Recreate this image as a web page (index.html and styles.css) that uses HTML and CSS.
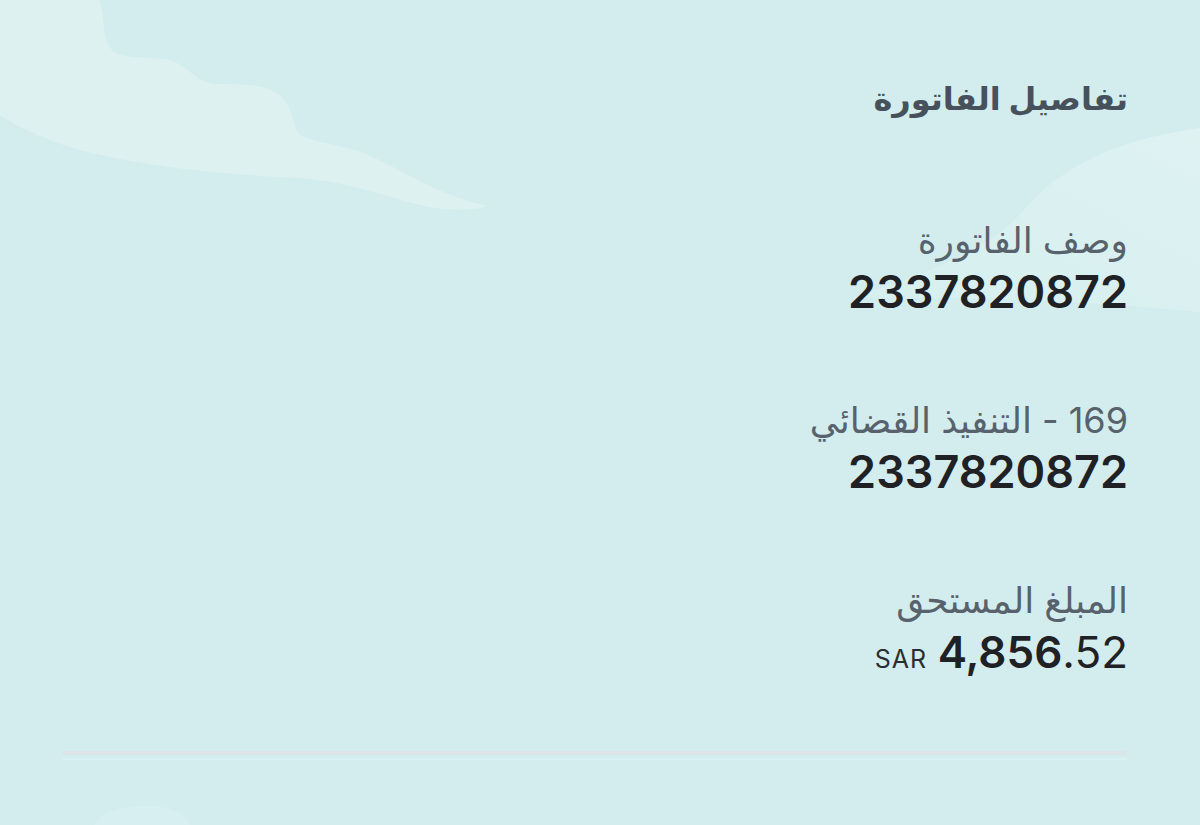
FILE: index.html
```html
<!DOCTYPE html>
<html lang="ar" dir="rtl">
<head>
    <meta charset="UTF-8">
    <meta name="viewport" content="width=device-width, initial-scale=1.0">
    <title>تفاصيل الفاتورة</title>
    <link rel="stylesheet" href="styles.css">
</head>
<body>
    <div class="page">
        <svg class="clouds" viewBox="0 0 1200 825" preserveAspectRatio="none" aria-hidden="true">
            <defs>
                <linearGradient id="fade" x1="1" y1="0" x2="0" y2="1">
                    <stop offset="0" stop-color="#def2f2"/>
                    <stop offset="1" stop-color="#d6efef"/>
                </linearGradient>
            </defs>
            <path fill="#ddf1f1" d="M0,0 L100,0 C104,20 103,40 112,50 C122,60 150,56 170,60 C188,66 195,82 215,84 C240,84 265,84 280,95 C292,105 292,125 300,135 C320,145 350,145 375,158 C410,175 440,195 487,206 C470,212 440,210 420,205 C380,195 350,182 300,178 C230,175 150,168 80,150 C40,138 15,125 0,115 Z"/>
            <path fill="url(#fade)" d="M1200,128 C1110,140 1055,172 1022,212 C995,245 935,272 850,298 C960,296 1080,300 1200,312 Z"/>
            <path fill="#d7eff0" d="M95,825 C100,812 120,806 150,806 C172,806 185,815 190,825 Z"/>
        </svg>

        <div class="content">
            <h1 class="title">تفاصيل الفاتورة</h1>

            <div class="fields">
                <div class="field">
                    <div class="label">وصف الفاتورة</div>
                    <div class="value">2337820872</div>
                </div>

                <div class="field">
                    <div class="label">169 - التنفيذ القضائي</div>
                    <div class="value">2337820872</div>
                </div>

                <div class="field">
                    <div class="label">المبلغ المستحق</div>
                    <div class="amount">
                        <span class="currency">SAR</span>
                        <span class="whole">4,856</span><span class="fraction">.52</span>
                    </div>
                </div>
            </div>

            <div class="divider"></div>
        </div>
    </div>
</body>
</html>
```

FILE: styles.css
```css
body {
    margin: 0;
    background-color: #d3edee;
    font-family: Inter, "DejaVu Sans", sans-serif;
}
.page {
    position: relative;
    height: 825px;
    overflow: hidden;
}
.clouds {
    position: absolute;
    top: 0;
    left: 0;
    width: 100%;
    height: 100%;
}
.content {
    position: relative;
    padding: 76px 72px 0 62px;
    text-align: right;
}
.title {
    margin: 0 0 97px 0;
    font-size: 32px;
    font-weight: 700;
    line-height: 45px;
    color: #46515b;
}
.fields {
    display: flex;
    flex-direction: column;
    gap: 79px;
}
.label {
    margin-bottom: 3px;
    font-size: 36px;
    line-height: 44px;
    color: #57626c;
}
.value {
    font-size: 45px;
    font-weight: 600;
    line-height: 54px;
    color: #1f2124;
}
.amount {
    direction: ltr;
    text-align: right;
    line-height: 54px;
    color: #1f2124;
}
.currency {
    font-size: 25px;
    letter-spacing: 1px;
    margin-right: 6px;
    color: #2b2e31;
}
.whole {
    font-size: 44px;
    font-weight: 600;
}
.fraction {
    font-size: 44px;
    font-weight: 400;
}
.divider {
    height: 4px;
    margin-top: 62px;
    border-radius: 2px;
    background-color: #dde4e9;
    box-shadow: 0 6px 0 -1px #d8f0f2;
}
```
